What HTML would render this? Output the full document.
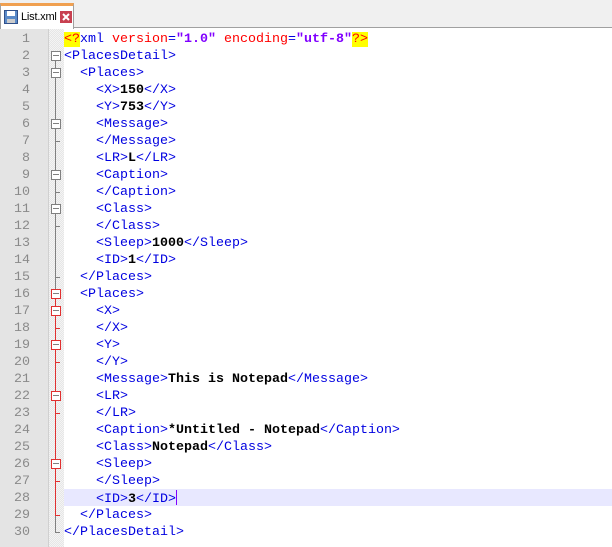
<!DOCTYPE html>
<html><head><style>
body{margin:0;width:612px;height:547px;overflow:hidden;background:#fff;position:relative;font-family:"Liberation Mono",monospace}
#top{position:absolute;left:0;top:0;width:612px;height:28px;background:#f0f0f0;border-bottom:1px solid #a0a0a0;box-sizing:border-box}
#tab{position:absolute;left:0;top:3px;width:74px;height:26px;background:#fff;border:1px solid #a0a0a0;border-bottom:none;border-top:3px solid #f0a050;box-sizing:border-box;font-family:"Liberation Sans",sans-serif;font-size:11px;letter-spacing:-0.2px}
#gut{position:absolute;left:0;top:29px;width:48px;height:518px;background:#e4e4e4;border-right:1px solid #d0d0d0}
#fold{position:absolute;left:49px;top:29px;width:15px;height:518px;background-color:#f4f4f4;background-image:linear-gradient(45deg,#e6e6e6 25%,transparent 25%,transparent 75%,#e6e6e6 75%),linear-gradient(45deg,#e6e6e6 25%,transparent 25%,transparent 75%,#e6e6e6 75%);background-size:2px 2px;background-position:0 0,1px 1px}
.ln{position:absolute;left:0;width:30px;text-align:right;color:#8a8a8a;font-size:13.33px;line-height:17px}
.tx{position:absolute;left:64px;white-space:pre;font-size:13.33px;line-height:17px;color:#000;font-weight:bold}
.t{color:#0000e0;font-weight:normal}
.a{color:#ff0000;font-weight:normal}
.v{color:#8000ff;font-weight:bold}
.d{color:#ff0000;background:#ffff00;font-weight:normal}
.box{position:absolute;left:51px;width:8px;height:8px;border:1px solid #808080;background:#fff}
.box:after{content:"";position:absolute;left:1px;top:3px;width:6px;height:1px;background:#808080}
.box.r{border-color:#e03030}
.vl{position:absolute;left:55px;width:1px;background:#808080}
.tk{position:absolute;left:55px;width:5px;height:1px;background:#808080}
</style></head><body>
<div id="top"><div id="tab">
<svg style="position:absolute;left:3px;top:4px" width="14" height="14"><rect x="0.5" y="0.5" width="13" height="13" fill="#5a8ac8" stroke="#30508a"/><rect x="3" y="1" width="8" height="5" fill="#fff"/><rect x="3" y="9" width="8" height="4" fill="#ccc"/></svg>
<span style="position:absolute;left:20px;top:5px;color:#000">List.xml</span>
<svg style="position:absolute;left:59px;top:5px" width="12" height="12"><rect width="12" height="12" fill="#c84050"/><path d="M3 3L9 9M9 3L3 9" stroke="#fff" stroke-width="2"/></svg>
</div></div>
<div id="gut"></div><div id="fold"></div>
<div style="position:absolute;left:64px;top:489px;width:548px;height:17px;background:#e8e8ff"></div>
<div id="c"></div>
<script>
var L=[
'<span class="d">&lt;?</span><span class="t">xml</span> <span class="a">version</span><span class="t">=</span><span class="v">"1.0"</span> <span class="a">encoding</span><span class="t">=</span><span class="v">"utf-8"</span><span class="d">?&gt;</span>',
'<span class="t">&lt;PlacesDetail&gt;</span>',
'  <span class="t">&lt;Places&gt;</span>',
'    <span class="t">&lt;X&gt;</span>150<span class="t">&lt;/X&gt;</span>',
'    <span class="t">&lt;Y&gt;</span>753<span class="t">&lt;/Y&gt;</span>',
'    <span class="t">&lt;Message&gt;</span>',
'    <span class="t">&lt;/Message&gt;</span>',
'    <span class="t">&lt;LR&gt;</span>L<span class="t">&lt;/LR&gt;</span>',
'    <span class="t">&lt;Caption&gt;</span>',
'    <span class="t">&lt;/Caption&gt;</span>',
'    <span class="t">&lt;Class&gt;</span>',
'    <span class="t">&lt;/Class&gt;</span>',
'    <span class="t">&lt;Sleep&gt;</span>1000<span class="t">&lt;/Sleep&gt;</span>',
'    <span class="t">&lt;ID&gt;</span>1<span class="t">&lt;/ID&gt;</span>',
'  <span class="t">&lt;/Places&gt;</span>',
'  <span class="t">&lt;Places&gt;</span>',
'    <span class="t">&lt;X&gt;</span>',
'    <span class="t">&lt;/X&gt;</span>',
'    <span class="t">&lt;Y&gt;</span>',
'    <span class="t">&lt;/Y&gt;</span>',
'    <span class="t">&lt;Message&gt;</span>This is Notepad<span class="t">&lt;/Message&gt;</span>',
'    <span class="t">&lt;LR&gt;</span>',
'    <span class="t">&lt;/LR&gt;</span>',
'    <span class="t">&lt;Caption&gt;</span>*Untitled - Notepad<span class="t">&lt;/Caption&gt;</span>',
'    <span class="t">&lt;Class&gt;</span>Notepad<span class="t">&lt;/Class&gt;</span>',
'    <span class="t">&lt;Sleep&gt;</span>',
'    <span class="t">&lt;/Sleep&gt;</span>',
'    <span class="t">&lt;ID&gt;</span>3<span class="t">&lt;/ID&gt;</span><span style="display:inline-block;width:1px;height:15px;background:#8000ff;vertical-align:-3px"></span>',
'  <span class="t">&lt;/Places&gt;</span>',
'<span class="t">&lt;/PlacesDetail&gt;</span>'];
var h='';
function T(i){return 31+(i-1)*17;}
h+='<div class="vl" style="top:'+(T(2)+12)+'px;height:'+(T(30)+8-T(2)-12)+'px"></div>';
h+='<div class="vl" style="background:#e03030;top:'+(T(16)+12)+'px;height:'+(T(29)+8-T(16)-12)+'px"></div>';
var boxes={2:0,3:0,6:0,9:0,11:0,16:1,17:1,19:1,22:1,26:1};
var ticks={15:0,29:1,30:0,18:1,20:1,23:1,27:1,7:0,10:0,12:0};
for(var i=1;i<=30;i++){
 h+='<div class="ln" style="top:'+T(i)+'px">'+i+'</div>';
 h+='<div class="tx" style="top:'+T(i)+'px">'+L[i-1]+'</div>';
 if(i in boxes)h+='<div class="box'+(boxes[i]?' r':'')+'" style="top:'+(T(i)+3)+'px"></div>';
 if(i in ticks)h+='<div class="tk" style="top:'+(T(i)+8)+'px;'+(ticks[i]?'background:#e03030':'')+'"></div>';
}
document.getElementById('c').innerHTML=h;
</script>
</body></html>
